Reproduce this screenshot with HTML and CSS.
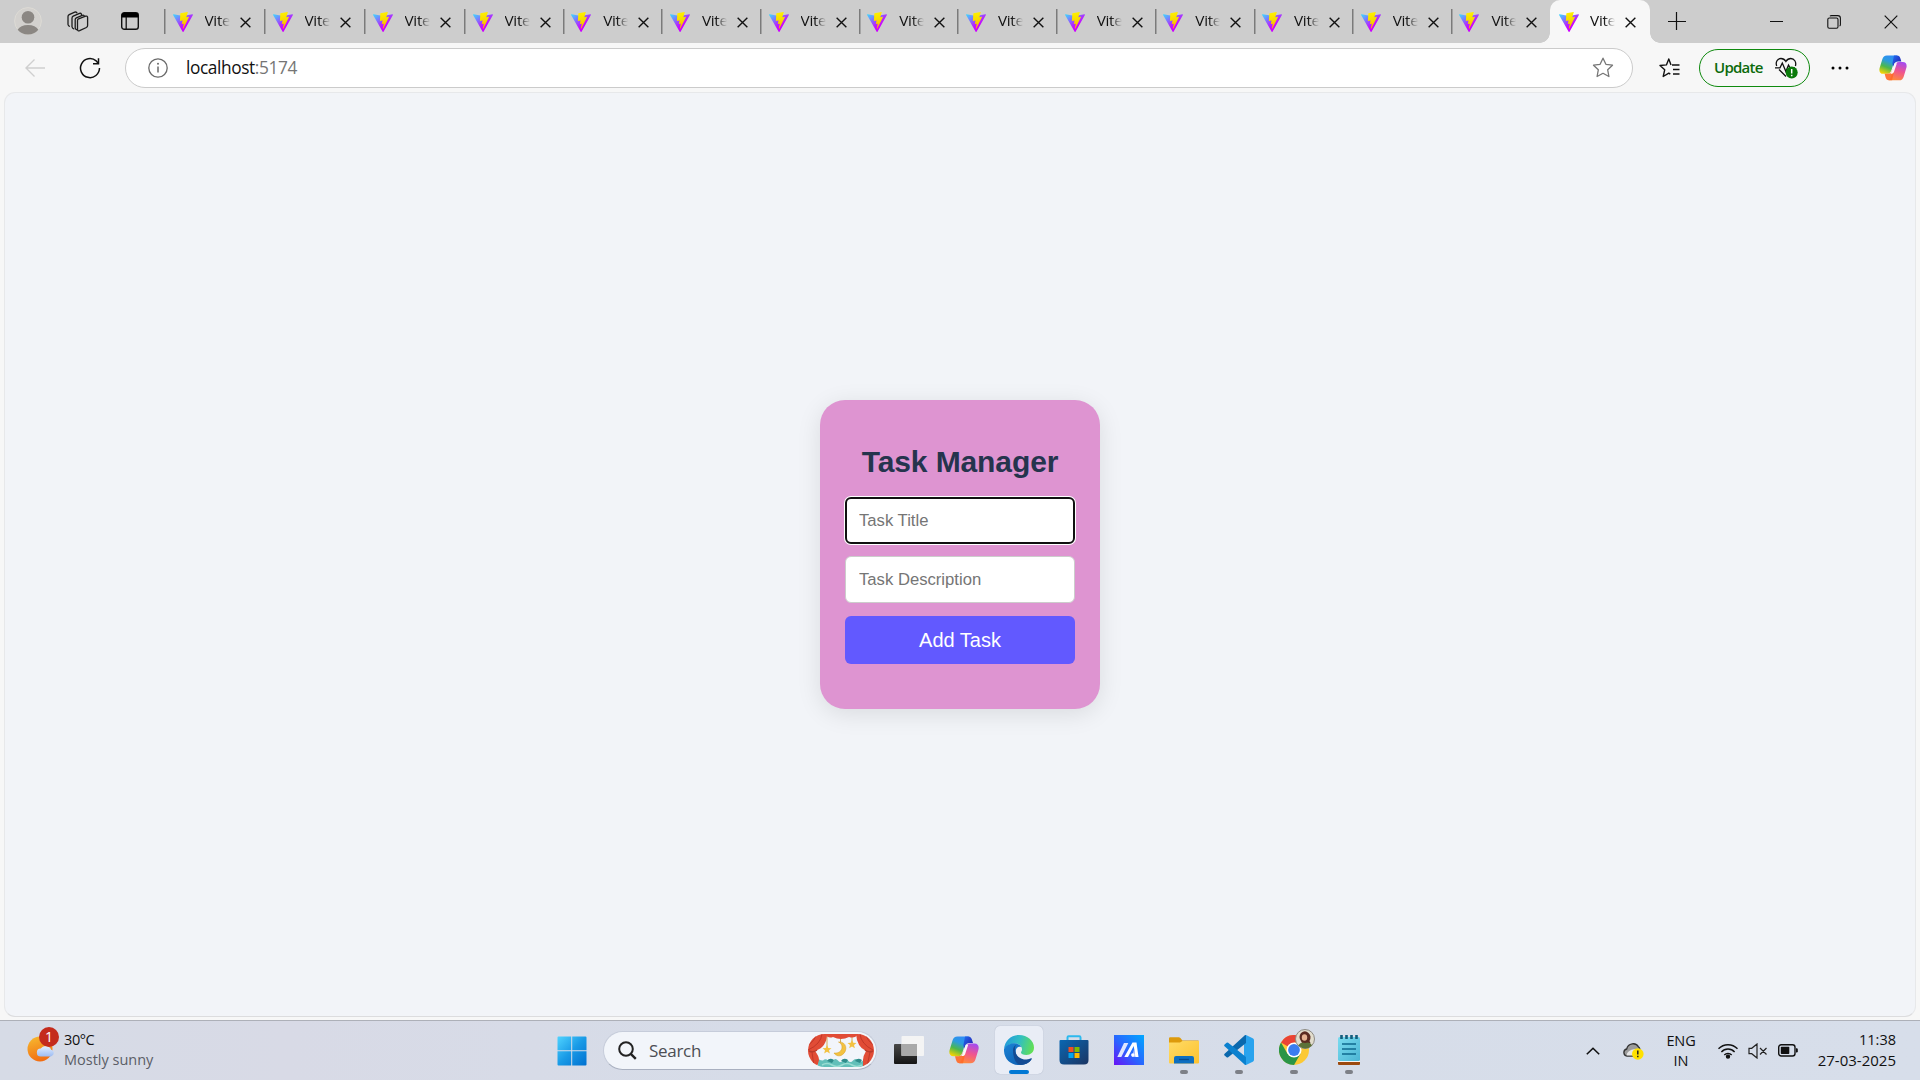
FILE: index.html
```html
<!DOCTYPE html>
<html lang="en">
<head>
<meta charset="utf-8">
<title>Task Manager</title>
<link rel="stylesheet" href="styles.css">
</head>
<body>
<svg class="defs" width="0" height="0" aria-hidden="true">
  <defs>
    <linearGradient id="vite-a" x1="-1%" y1="8%" x2="54%" y2="74%"><stop offset="0" stop-color="#41d1ff"/><stop offset=".75" stop-color="#b02cff"/><stop offset="1" stop-color="#cc00ff"/></linearGradient>
    <linearGradient id="vite-b" x1="43%" y1="2%" x2="50%" y2="89%"><stop offset="0" stop-color="#fff000"/><stop offset=".5" stop-color="#f7dc00"/><stop offset="1" stop-color="#ffb400"/></linearGradient>
    <linearGradient id="cop-a" x1=".6" y1="0" x2=".2" y2="1"><stop offset="0" stop-color="#2f8df5"/><stop offset=".3" stop-color="#2b9be0"/><stop offset=".62" stop-color="#4cb84c"/><stop offset="1" stop-color="#ffd500"/></linearGradient>
    <linearGradient id="cop-b" x1=".7" y1="0" x2=".4" y2="1"><stop offset="0" stop-color="#a44bf0"/><stop offset=".5" stop-color="#f0558f"/><stop offset="1" stop-color="#ff8a3c"/></linearGradient>
    <linearGradient id="cop-c" x1="0" y1="0" x2="1" y2="1"><stop offset="0" stop-color="#1f6ff0"/><stop offset="1" stop-color="#2a10a8"/></linearGradient>
    <symbol id="vite" viewBox="0 0 256 257">
      <path fill="url(#vite-a)" d="M255.153 37.938 134.897 252.976c-2.483 4.44-8.862 4.466-11.382.048L.875 37.958c-2.746-4.814 1.371-10.646 6.827-9.67l120.385 21.517a6.537 6.537 0 0 0 2.322-.004l117.867-21.483c5.438-.991 9.574 4.796 6.877 9.62Z"/>
      <path fill="url(#vite-b)" d="M185.432.063 96.44 17.501a3.268 3.268 0 0 0-2.634 3.014l-5.474 92.456a3.268 3.268 0 0 0 3.997 3.378l24.777-5.718c2.318-.535 4.413 1.507 3.936 3.838l-7.361 36.047c-.495 2.426 1.782 4.5 4.151 3.78l15.304-4.649c2.372-.72 4.652 1.36 4.15 3.788l-11.698 56.621c-.732 3.542 3.979 5.473 5.943 2.437l1.313-2.028 72.516-144.72c1.215-2.423-.88-5.186-3.54-4.672l-25.505 4.922c-2.396.462-4.435-1.77-3.759-4.114l16.646-57.705c.677-2.35-1.37-4.583-3.769-4.113Z"/>
    </symbol>
    <symbol id="x" viewBox="0 0 12 12"><path d="M.7.7 11.3 11.3M11.3.7.7 11.3" fill="none" stroke="#111" stroke-width="1.5"/></symbol>
    <symbol id="copilot" viewBox="0 0 30 28">
      <path fill="url(#cop-a)" d="M8.5.5h11.6c-1.6.7-2.3 2.2-2.9 4L13.500 16c-.8 2.500-1.800 4.300-4.500 4.300H4.500C1 20.300-.3 17.500.6 14L3.500 4.500C4.300 2 5.800.5 8.500.5Z"/>
      <path fill="url(#cop-c)" d="M16 .5h3.200c2.300 0 3.200 1.300 3.800 3.300l1 3.200h-3.500c-2.300 0-3.500 1-4.200 3l-1.100 3-.8-4Z"/>
      <path fill="url(#cop-b)" d="M21.500 7.500h4c3.500 0 4.800 2.800 3.900 6.300l-2.900 9.500c-.8 2.500-2.300 4-5 4H9.900c1.600-.7 2.300-2.200 2.900-4l3.700-11.500c.8-2.500 2.300-4.300 5-4.300Z"/>
      <path fill="#ff6a28" d="M14 27.300h-3.200c-2.300 0-3.200-1.300-3.800-3.300l-1-3.700h3.500c2.300 0 3.500-1 4.200-3l1-2.500 1.300 4Z" opacity=".92"/>
      <path fill="#fbf6fa" d="M16.700 8.800h2.500l-3.200 9.600q-.7 1.700-2.200 1.700h-1.600q1-1.500 1.500-3.200Z"/>
    </symbol>
  </defs>
</svg>

<div class="screen">
  <header class="tabstrip">
    <div class="strip-button avatar-cell"><svg width="28" height="28" viewBox="0 0 28 28"><circle cx="14" cy="14" r="13.400" fill="#d3d1ce" stroke="#dddbd5"/><circle cx="14" cy="10.300" r="6.300" fill="#8b8783"/><path d="M3.600 22.700C5.500 19.600 9 18 14 18s8.500 1.600 10.400 4.700A13.400 13.400 0 0 1 14 27.400 13.400 13.400 0 0 1 3.600 22.700Z" fill="#8b8783"/></svg></div>
    <div class="strip-button"><svg width="22" height="22" viewBox="0 0 22 22" fill="none" stroke="#1c1c1c" stroke-width="1.300"><path d="M11 8.200 18.600 5.200q2-.6 2 1.200v8.200q0 1.300-1.200 1.900l-6.800 3.200q-2 .7-2.100-1.200V10q0-1.400.5-1.800ZM14.500 4.300V3.600q-.2-1.800-2-1.200L6.200 5.200Q5 5.800 5 7.200v8.600q.1 1.800 2.300 2.300M10 2.200Q9.500.5 7.700 1.200L2.200 3.600Q1 4.200 1 5.500v8q.2 1.800 2 1.900M17.500 5.300q-.5-1.500-2.200-1l-6 2.500Q8.200 7.300 8.200 8.600V17q.2 1.600 2.400 2"/></svg></div>
    <div class="strip-button actions-cell"><svg width="18" height="18" viewBox="0 0 18 18"><rect x=".7" y=".7" width="16.600" height="16.600" rx="2.600" fill="none" stroke="#111" stroke-width="1.400"/><path d="M.7 5.500V3.200Q.7.700 3.200.7h11.600q2.500 0 2.500 2.500v2.300Z" fill="#000"/><path d="M5.200 5v12" stroke="#111" stroke-width="1.300"/></svg></div>
    <nav class="tabs">
      <div class="tab wide"><svg class="favicon"><use href="#vite"/></svg><span class="tab-title">Vite</span><svg class="tab-close"><use href="#x"/></svg></div>
      <div class="tab wide"><svg class="favicon"><use href="#vite"/></svg><span class="tab-title">Vite</span><svg class="tab-close"><use href="#x"/></svg></div>
      <div class="tab wide"><svg class="favicon"><use href="#vite"/></svg><span class="tab-title">Vite</span><svg class="tab-close"><use href="#x"/></svg></div>
      <div class="tab"><svg class="favicon"><use href="#vite"/></svg><span class="tab-title">Vite</span><svg class="tab-close"><use href="#x"/></svg></div>
      <div class="tab"><svg class="favicon"><use href="#vite"/></svg><span class="tab-title">Vite</span><svg class="tab-close"><use href="#x"/></svg></div>
      <div class="tab"><svg class="favicon"><use href="#vite"/></svg><span class="tab-title">Vite</span><svg class="tab-close"><use href="#x"/></svg></div>
      <div class="tab"><svg class="favicon"><use href="#vite"/></svg><span class="tab-title">Vite</span><svg class="tab-close"><use href="#x"/></svg></div>
      <div class="tab"><svg class="favicon"><use href="#vite"/></svg><span class="tab-title">Vite</span><svg class="tab-close"><use href="#x"/></svg></div>
      <div class="tab"><svg class="favicon"><use href="#vite"/></svg><span class="tab-title">Vite</span><svg class="tab-close"><use href="#x"/></svg></div>
      <div class="tab"><svg class="favicon"><use href="#vite"/></svg><span class="tab-title">Vite</span><svg class="tab-close"><use href="#x"/></svg></div>
      <div class="tab"><svg class="favicon"><use href="#vite"/></svg><span class="tab-title">Vite</span><svg class="tab-close"><use href="#x"/></svg></div>
      <div class="tab"><svg class="favicon"><use href="#vite"/></svg><span class="tab-title">Vite</span><svg class="tab-close"><use href="#x"/></svg></div>
      <div class="tab"><svg class="favicon"><use href="#vite"/></svg><span class="tab-title">Vite</span><svg class="tab-close"><use href="#x"/></svg></div>
      <div class="tab"><svg class="favicon"><use href="#vite"/></svg><span class="tab-title">Vite</span><svg class="tab-close"><use href="#x"/></svg></div>
      <div class="tab active"><svg class="favicon"><use href="#vite"/></svg><span class="tab-title">Vite</span><svg class="tab-close"><use href="#x"/></svg></div>
    </nav>
    <div class="new-tab"><svg width="18" height="18" viewBox="0 0 18 18"><path d="M8.500 0v18M0 9.500h18" stroke="#111" stroke-width="1.200"/></svg></div>
    <div class="window-controls">
      <div class="control"><svg width="13" height="13" viewBox="0 0 13 13"><path d="M0 6.500h13" stroke="#111" stroke-width="1"/></svg></div>
      <div class="control"><svg width="14" height="14" viewBox="0 0 14 14" fill="none" stroke="#111" stroke-width="1.100"><rect x=".8" y="3" width="10.200" height="10.200" rx="1.500"/><path d="M3 1.200Q3.400.6 4.500.6h6.200q2.700 0 2.700 2.700v6.200q0 1.100-.8 1.600"/></svg></div>
      <div class="control"><svg width="14" height="14" viewBox="0 0 14 14"><path d="M.7.7l12.600 12.600M13.300.7.7 13.300" stroke="#111" stroke-width="1.200"/></svg></div>
    </div>
  </header>

  <div class="toolbar">
    <div class="tool"><svg width="20" height="18" viewBox="0 0 20 18"><path d="M20 9H1M9.500.6 1 9l8.500 8.400" fill="none" stroke="#cfcfcf" stroke-width="1.400"/></svg></div>
    <div class="tool"><svg width="22" height="22" viewBox="0 0 22 22" fill="none" stroke="#111" stroke-width="1.500"><path d="M20.500 11A9.500 9.500 0 1 1 17.200 3.900L19.300 6.500M19.500 1.300v5.400H14"/></svg></div>
    <div class="address">
      <svg class="info" width="20" height="20" viewBox="0 0 20 20"><circle cx="10" cy="10" r="9.200" fill="none" stroke="#6a6a6a" stroke-width="1.300"/><path d="M10 8.500v6" stroke="#6a6a6a" stroke-width="1.500"/><circle cx="10" cy="5.800" r="1" fill="#6a6a6a"/></svg>
      <span class="url">localhost<span class="port">:5174</span></span>
      <svg class="star" width="22" height="21" viewBox="0 0 22 21"><path d="m11 1.200 2.900 6.100 6.600.9-4.800 4.600 1.200 6.700L11 16.300l-5.900 3.200 1.200-6.700L1.500 8.200l6.600-.9Z" fill="none" stroke="#767676" stroke-width="1.300" stroke-linejoin="round"/></svg>
    </div>
    <div class="tool fav-tool"><svg width="21" height="20" viewBox="0 0 21 20" fill="none" stroke="#111" stroke-width="1.400" stroke-linejoin="round"><path d="M13 7h7.500M14 11.500h6.500M14 16h6.500M12 6.900 9.800 1 7.400 6.900 1 7.500l4.700 4.300-1.500 6.700 5.600-3.400 1.500 1"/></svg></div>
    <div class="update"><span>Update</span><svg width="26" height="22" viewBox="0 0 26 22"><g fill="none" stroke="#111" stroke-width="1.300"><path d="M2.700 9C1.200 5 3.500 1.500 7 1.500c2.200 0 3.900 1.400 4.900 3 1-1.600 2.700-3 4.900-3 3.500 0 5.800 3.500 4.600 7.500M5 12.500l7 7"/><path d="M1 10.800h5L8.300 6l3.600 8.500L14.500 8l1.500 2.800h5"/></g><circle cx="17.700" cy="15.500" r="6" fill="#0a7a0a"/><path d="M17.700 12v4.500M17.700 17.700v1.600" stroke="#fff" stroke-width="1.500"/></svg></div>
    <div class="tool dots-tool"><svg width="18" height="4" viewBox="0 0 18 4"><circle cx="2" cy="2" r="1.500"/><circle cx="9" cy="2" r="1.500"/><circle cx="16" cy="2" r="1.500"/></svg></div>
    <div class="tool copilot-tool"><svg width="28" height="26"><use href="#copilot"/></svg></div>
  </div>

  <main class="viewport">
    <section class="card">
      <h1>Task Manager</h1>
      <input class="field focused" type="text" placeholder="Task Title">
      <input class="field" type="text" placeholder="Task Description">
      <button class="add" type="button">Add Task</button>
    </section>
  </main>

  <footer class="taskbar">
    <div class="weather">
      <div class="weather-icon">
        <svg width="30" height="30" viewBox="0 0 30 30"><defs><linearGradient id="sun" x1=".3" y1="0" x2=".6" y2="1"><stop offset="0" stop-color="#f6b62e"/><stop offset="1" stop-color="#f26a10"/></linearGradient><linearGradient id="cloud" x1="0" y1="0" x2="0" y2="1"><stop offset="0" stop-color="#e4f0ff"/><stop offset="1" stop-color="#9dbcf2"/></linearGradient></defs><circle cx="13" cy="13" r="12.500" fill="url(#sun)"/><path d="M14 20.500a4 4 0 0 1-.3-8 6 6 0 0 1 10.500 1.200 3.500 3.500 0 0 1-.3 6.800Z" fill="url(#cloud)"/></svg>
        <span class="badge">1</span>
      </div>
      <div class="weather-text"><span class="temp">30°C</span><span class="condition">Mostly sunny</span></div>
    </div>

    <div class="start"><svg width="30" height="30" viewBox="0 0 30 30"><defs><linearGradient id="win" x1="0" y1="0" x2="1" y2="1"><stop offset="0" stop-color="#4fd3ff"/><stop offset=".5" stop-color="#199ae6"/><stop offset="1" stop-color="#0070d0"/></linearGradient></defs><path fill="url(#win)" d="M1.500.5h12.700v13.700H.5V1.500q0-1 1-1Zm13.700 0h13.300q1 0 1 1v12.700H15.200ZM.5 15.200h13.700v14.300H1.500q-1 0-1-1Zm14.700 0h14.300v13.300q0 1-1 1H15.200Z"/></svg></div>
    <div class="search">
      <svg width="19" height="19" viewBox="0 0 19 19"><circle cx="8" cy="8" r="6.800" fill="none" stroke="#222" stroke-width="2"/><path d="m12.800 12.800 5 5" stroke="#222" stroke-width="2.400"/></svg>
      <span>Search</span>
      <svg class="theatre" width="66" height="33" viewBox="0 0 66 33">
        <defs><clipPath id="pill"><rect width="66" height="33" rx="16.500"/></clipPath></defs>
        <g clip-path="url(#pill)">
          <rect width="66" height="34" fill="#f2f5fb"/>
          <path d="M10 34V25q3 1.500 5 1.500 2.500-2.500 5 0t5 0q2.500-3 5 0t5 0q2.500-3 5 0t5 0q2.500-3 5 0t6-1V34Z" fill="#62bfb9"/>
          <path d="M19 27q2.500-4 7-1l-2 3Zm14 0q2.500-4 7-1l-2 3Zm14 0q2.500-4 7-1l-2 3Z" fill="#2f8c8b"/>
          <path d="M14 31q5-3 10 0t10 0 10 0 10 0" fill="none" stroke="#98dcd2" stroke-width="1.500"/>
          <path d="M19 2v11M32.500 0v9M44 2v6" stroke="#c99a35" stroke-width=".8"/>
          <path d="M30.500 8c8-1 10 9 3.500 13-3 1.800-6.500.5-8-2 4.500.5 8-2 8-6 0-2.300-1.300-4-3.500-5Z" fill="#f3c242" stroke="#d79c24" stroke-width=".5"/>
          <path d="m19 11 1.300 3 3.200.2-2.500 2 .9 3.200-2.900-1.700-2.800 1.700.8-3.200-2.500-2 3.200-.2ZM44 6l1.300 2.800 3.200.3-2.500 2 .9 3.200-2.900-1.700-2.800 1.700.8-3.200-2.500-2 3.200-.3Z" fill="#f3c242"/>
          <path d="M0 0h19q0 13-12 17 4 5 4 9l-2 7H0Z" fill="#e14c36"/><path d="M66 0H48q1 13 10 17-3 5-3 9v7h11Z" fill="#e14c36"/>
          <path d="M17 0h33q-3 5-9 3-8 4-16 0-5 2-8-3Z" fill="#e14c36"/>
          <path d="M14 0Q13 10 0 16M8 0Q7 7 0 11M4 18l2 15M52 0q1 10 13 16M58 0q1 7 8 11M62 18l-3 15" fill="none" stroke="#b93226" stroke-width=".8"/>
          <path d="M1 17q4 2 8-1M57 16q4 3 8 1" fill="none" stroke="#b93a2b" stroke-width="1.500"/>
        </g>
      </svg>
    </div>

    <div class="apps">
      <div class="app"><svg width="30" height="28" viewBox="0 0 30 28"><defs><linearGradient id="tv" x1="0" y1="0" x2="0" y2="1"><stop offset="0" stop-color="#484848"/><stop offset="1" stop-color="#151515"/></linearGradient></defs><rect x="0" y="8" width="23" height="20" rx="1" fill="url(#tv)"/><rect x="7.500" y="0" width="22.500" height="20" rx="1" fill="#f4f4f4"/><path d="M7.500 8H23v12H7.500Z" fill="#a9a9a9"/></svg></div>
      <div class="app"><svg width="30" height="28"><use href="#copilot"/></svg></div>
      <div class="app"><div class="tile"><svg width="30" height="30" viewBox="0 0 30 30"><defs><linearGradient id="edge-top" x1="0" y1=".3" x2="1" y2=".5"><stop offset="0" stop-color="#2298dc"/><stop offset=".5" stop-color="#31bfc2"/><stop offset="1" stop-color="#62df55"/></linearGradient><linearGradient id="edge-bot" x1="0" y1="0" x2="1" y2="1"><stop offset="0" stop-color="#1b83d5"/><stop offset="1" stop-color="#0b57ab"/></linearGradient></defs><path d="M0 14C.8 6 7 0 15 0c8.500 0 15 6 15 12.500 0 4.700-3.500 7.500-7.500 7.500-3.500 0-5.500-1.200-5.500-2.500 0-.9 1-1.300 1-3.200 0-3.300-3.200-5.800-7-5.800-4.500 0-8.500 2.300-11 5.500Z" fill="url(#edge-top)"/><path d="M0 14C2 10.500 6 8.300 10.500 8.300c3 0 5.800 1.500 7 3.700-1-.5-5.800-.8-5.800 4.500 0 6 5.800 9.500 10.300 9.500 2.300 0 4-.7 5.300-1.300C24.800 28 20.500 30 15 30 6.500 30-.5 23.500 0 14Z" fill="url(#edge-bot)"/><path d="M9 15c0-2 1-4 3.500-5.500C10.200 12 11 15 11.500 17c1 4.500 6 8 11 7.500 2 0 3.500-.8 4.800-1.200.6-.1.800.5.400 1-2.500 3.700-6.500 5.700-11 5.700C12 29.500 9 23 9 15Z" fill="#134b94"/></svg><span class="running current"></span></div></div>
      <div class="app"><svg width="30" height="30" viewBox="0 0 30 30"><defs><linearGradient id="bag" x1="0" y1="0" x2="1" y2="1"><stop offset="0" stop-color="#0a67b2"/><stop offset="1" stop-color="#1b3563"/></linearGradient></defs><path d="M8.500 7V2.500q0-1.200 1.200-1.200h10.600q1.200 0 1.200 1.200V7" fill="none" stroke="#2db9ee" stroke-width="2"/><path d="M.5 6q0-1 1-1h27q1 0 1 1v19q0 4.500-4.500 4.500H5Q.5 29.500.5 25Z" fill="url(#bag)"/><path d="M9.500 12h5v5h-5Z" fill="#f25022"/><path d="M15.500 12h5v5h-5Z" fill="#7fba00"/><path d="M9.500 18h5v5h-5Z" fill="#00a4ef"/><path d="M15.500 18h5v5h-5Z" fill="#ffb900"/></svg></div>
      <div class="app"><svg width="30" height="30" viewBox="0 0 30 30"><defs><linearGradient id="asus" x1="1" y1="0" x2="0" y2="1"><stop offset="0" stop-color="#00a8ff"/><stop offset=".55" stop-color="#2b63ff"/><stop offset="1" stop-color="#6a12f5"/></linearGradient></defs><rect width="30" height="30" fill="url(#asus)"/><path d="M10 8h4.300L7.300 22H3.300Z" fill="#dfe6ff"/><path d="M18.500 7.500h4l2 14.500h-3.300l-1.500-11L14 22h-3.700Z" fill="#fff"/><path d="m20.300 13 1 9H18Z" fill="#a9bcff"/><circle cx="18.800" cy="20" r="1.700" fill="#fff"/></svg></div>
      <div class="app"><svg width="30" height="27" viewBox="0 0 30 27"><defs><linearGradient id="folder" x1="0" y1="0" x2="1" y2="1"><stop offset="0" stop-color="#ffdb66"/><stop offset="1" stop-color="#fdc22f"/></linearGradient></defs><path d="M0 1.500Q0 .3 1.200.3h8.500q1 0 1.700.8l2 2.400H29q1 0 1 1V10H0Z" fill="#dd9a0c"/><path d="M0 5.500h11l2.500-1.500H30v21.500q0 1-1 1H1q-1 0-1-1Z" fill="url(#folder)"/><path d="M5 26.500V21q0-2 2-2h16q2 0 2 2v5.500Z" fill="#0f6fc0"/><path d="M10 22.500h10" stroke="#074b8d" stroke-width="1.300"/></svg><span class="running"></span></div>
      <div class="app"><svg width="30" height="30" viewBox="0 0 30 30"><path d="m22 0 6.700 3.200q1.300.7 1.300 2v19.600q0 1.300-1.300 2L22 30l-2-1V1Z" fill="#29a3ee"/><path d="M22 0v8L4.200 22.300q-.8.600-1.600 0L.6 20.500q-.9-.9 0-1.700L20.300.7Q21 0 22 0Z" fill="#0a68ad"/><path d="M22 30v-8L4.200 7.700q-.8-.6-1.600 0L.6 9.500q-.9.900 0 1.700l19.700 18.100Q21 30 22 30Z" fill="#0b81cf"/></svg><span class="running"></span></div>
      <div class="app"><div class="chrome"><svg width="30" height="30" viewBox="0 0 30 30"><circle cx="15" cy="15" r="15" fill="#fcc934"/><path d="M15 15 2 7.500A15 15 0 0 1 28 7.500H15Z" fill="#ea4335"/><path d="M2 7.500A15 15 0 0 0 15 30l6.500-11.300L15 15 8.500 18.700Z" fill="#2a9547"/><circle cx="15" cy="15" r="7.500" fill="#fff"/><circle cx="15" cy="15" r="5.900" fill="#3b7df0"/></svg>
        <svg class="profile" width="20" height="20" viewBox="0 0 20 20"><circle cx="10" cy="10" r="9.500" fill="#e2ddcd" stroke="#8d8a83"/><path d="M6 12Q3 8 6 4q4-3.500 7.500 0 3.500 3 1 8l1 2H7Z" fill="#5b2a20"/><ellipse cx="9.500" cy="8.500" rx="2.700" ry="3.300" fill="#e5b191"/><path d="M3 16.500Q6 12.500 10 14q5-2 7 2.500-6 6-14 0Z" fill="#5c7138"/></svg></div><span class="running"></span></div>
      <div class="app"><svg width="24" height="30" viewBox="0 0 24 30"><defs><linearGradient id="note" x1="0" y1="0" x2="1" y2="1"><stop offset="0" stop-color="#7adcf0"/><stop offset="1" stop-color="#4bb4d3"/></linearGradient></defs><path d="M1 26h22v3q0 1-1 1H2q-1 0-1-1Z" fill="#9c4a10"/><path d="M1 25h22v2H1Z" fill="#f5f5f5"/><rect x="1" y="2" width="22" height="24" rx="1.500" fill="url(#note)"/><path d="M5 9h14M5 14h14M5 19h14" stroke="#0f6a8e" stroke-width="1.700"/><path d="M4.500 0v4M9.500 0v4M14.500 0v4M19.500 0v4" stroke="#125d7c" stroke-width="2.600"/></svg><span class="running"></span></div>
    </div>

    <div class="tray">
      <div class="tray-cell"><svg width="14" height="8" viewBox="0 0 14 8"><path d="m.8 7.300 6.200-6 6.200 6" fill="none" stroke="#111" stroke-width="1.600"/></svg></div>
      <div class="tray-cell"><svg width="21" height="18" viewBox="0 0 21 18"><path d="M4 14C0 13.500-.2 8 3.700 7 5 1 13 0 15.500 5c2 .5 2 3 1 9Z" fill="#9c9c9c" stroke="#333" stroke-width="1.300"/><path d="M3.500 13.500Q4 8 12 7l3 6.500Z" fill="#e6e6e6"/><circle cx="14.800" cy="12" r="5.800" fill="#ffe100"/><path d="M14.800 8.500v4M14.800 13.700v1.600" stroke="#222" stroke-width="1.500"/></svg></div>
      <div class="language"><span>ENG</span><span>IN</span></div>
      <div class="status">
        <svg width="20" height="16" viewBox="0 0 20 16" fill="none" stroke="#111" stroke-width="1.400"><path d="M.5 5.800a13.200 13.200 0 0 1 19 0M3.400 8.900a9 9 0 0 1 13.200 0M6.300 12a5.200 5.200 0 0 1 7.400 0"/><circle cx="10" cy="13.600" r="1.500" fill="#111"/></svg>
        <svg width="20" height="16" viewBox="0 0 20 16" fill="none" stroke="#222" stroke-width="1.200"><path d="M1 5.300h2.700L9 1v14l-5.300-4.300H1ZM12 5l6.500 6.500M18.500 5 12 11.500"/></svg>
        <svg width="20" height="13" viewBox="0 0 20 13"><rect x=".7" y=".7" width="16.300" height="11.300" rx="2.500" fill="none" stroke="#111" stroke-width="1.400"/><rect x="2.800" y="2.700" width="8.500" height="7.300" rx=".7" fill="#111"/><path d="M18 4.200h.6q1.200 0 1.200 1.200v1.800q0 1.200-1.200 1.200H18Z" fill="#111"/></svg>
      </div>
      <div class="clock"><span>11:38</span><span class="date">27-03-2025</span></div>
    </div>
  </footer>
</div>
</body>
</html>
```

FILE: styles.css
```css
* { box-sizing: border-box; }

body {
  margin: 0;
  font-family: "Open Sans", "Noto Sans", sans-serif;
  color: #111;
}

svg { display: block; flex: none; }
.defs { position: absolute; }

.screen {
  width: 1920px;
  height: 1080px;
  display: flex;
  flex-direction: column;
  overflow: hidden;
  background: #f7f7f7;
}

/* Tab strip */
.tabstrip {
  height: 43px;
  flex: none;
  display: flex;
  background: #cdcdcd;
  padding-left: 8px;
}
.strip-button {
  width: 40px;
  display: flex;
  align-items: center;
  justify-content: center;
  margin-right: 10px;
}
.avatar-cell { padding-bottom: 1px; }
.actions-cell { margin: 0 14px 0 2px; padding-bottom: 1px; }
.tabs { display: flex; }
.tab {
  width: 98.7px;
  height: 43px;
  display: flex;
  align-items: center;
  padding-left: 6.500px;
  background: linear-gradient(#7b7b7b, #7b7b7b) 0 9px / 1.500px 25px no-repeat;
}
.tab.wide { width: 100px; }
.favicon { width: 20px; height: 20px; margin: 1px 12px 0 2px; }
.tab-title {
  width: 25px;
  margin: 0 10px 3px 0;
  overflow: hidden;
  font-size: 15.300px;
  letter-spacing: -0.3px;
  line-height: 22px;
  white-space: nowrap;
  mask-image: linear-gradient(90deg, #000 55%, transparent 100%);
}
.tab-close { width: 11px; height: 11px; margin-top: 1px; }
.tab.active {
  width: 100px;
  position: relative;
  background: #f7f7f7;
  border-radius: 10px 10px 0 0;
}
.tab.active .favicon { margin-left: 3px; margin-right: 11px; }
.tab.active::before,
.tab.active::after {
  content: "";
  position: absolute;
  bottom: 0;
  width: 10px;
  height: 10px;
}
.tab.active::before { left: -10px; background: radial-gradient(circle at 0 0, transparent 9.500px, #f7f7f7 10px); }
.tab.active::after { right: -10px; background: radial-gradient(circle at 100% 0, transparent 9.500px, #f7f7f7 10px); }
.new-tab { margin-left: 18px; display: flex; align-items: center; padding-bottom: 2px; }
.window-controls { margin-left: auto; display: flex; padding-right: 1px; }
.control { width: 57px; display: flex; align-items: center; justify-content: center; }

/* Toolbar */
.toolbar {
  height: 49px;
  flex: none;
  display: flex;
  align-items: center;
  gap: 15px;
  padding: 0 7px 0 15px;
}
.tool { width: 40px; height: 40px; display: flex; align-items: center; justify-content: center; }
.address {
  width: 1508px;
  height: 40px;
  display: flex;
  align-items: center;
  padding: 0 18px 0 22px;
  border: 1px solid #cbcbcb;
  border-radius: 20px;
  background: #fff;
}
.url {
  margin: 1px 0 0 18px;
  font-size: 17.300px;
  letter-spacing: -0.4px;
  line-height: 24px;
  white-space: nowrap;
}
.port { color: #757575; }
.star { margin-left: auto; }
.fav-tool { margin-left: 1px; }
.update {
  width: 111px;
  height: 38px;
  margin-left: -5px;
  display: flex;
  align-items: center;
  gap: 11px;
  padding-left: 14px;
  border: 1.500px solid #0f8a0f;
  border-radius: 19px;
  color: #0b6a0b;
  font-size: 15px;
  font-weight: 600;
  letter-spacing: -0.75px;
}
.update span { width: 49px; white-space: nowrap; margin-bottom: 1px; }
.dots-tool { margin-left: -5px; }
.copilot-tool { margin-left: -2px; }

/* Page */
.viewport {
  height: 925px;
  flex: none;
  margin: 0 4px;
  display: flex;
  align-items: center;
  justify-content: center;
  background: #f2f4f8;
  border: 1px solid #e7e8ea;
  border-bottom-color: #dcdcde;
  border-radius: 11px;
}
.card {
  width: 280px;
  height: 309px;
  padding: 44px 25px 0;
  display: flex;
  flex-direction: column;
  background: #de94d1;
  border-radius: 25px;
  box-shadow: 0 5px 25px rgba(0, 0, 0, .1);
  font-family: "Liberation Sans", Arial, sans-serif;
}
.card h1 {
  margin: 0 0 18px;
  color: #25344d;
  font-size: 30px;
  letter-spacing: -0.1px;
  line-height: 35px;
  text-align: center;
  white-space: nowrap;
}
.field {
  width: 230px;
  height: 47px;
  margin: 0 0 13px;
  padding: 1px 13px 0;
  border: 1px solid #ccc;
  border-radius: 6px;
  background: #fff;
  font: 16.667px "Liberation Sans", Arial, sans-serif;
}
.field::placeholder { color: #757575; }
.field.focused { margin-bottom: 12px; border: 2px solid #101010; padding: 0 12px; box-shadow: 0 0 0 1px #fff; }
.add {
  width: 230px;
  height: 48px;
  padding: 0;
  border: 0;
  border-radius: 6px;
  background: #6259ff;
  color: #fff;
  font: 20px "Liberation Sans", Arial, sans-serif;
}

/* Taskbar */
.taskbar {
  height: 60px;
  flex: none;
  margin-top: 3px;
  display: flex;
  background: linear-gradient(90deg, #d6dbe6, #d8dae6 15%, #d6dce8 40%, #d7deea);
  border-top: 1px solid #adb0b8;
  font-size: 14.500px;
}
.weather { width: 545px; display: flex; padding: 6px 0 0 27px; }
.weather-icon { position: relative; width: 37px; padding-top: 9px; }
.badge {
  position: absolute;
  left: 12px;
  top: 0;
  width: 20px;
  height: 20px;
  border-radius: 50%;
  background: #c42b1c;
  color: #fff;
  font-size: 14px;
  line-height: 20px;
  text-align: center;
}
.weather-text { display: flex; flex-direction: column; line-height: 20px; padding-top: 3px; }
.temp { letter-spacing: -0.4px; }
.condition { color: #5b5e66; }
.start { width: 58px; padding: 15px 0 0 12px; }
.search {
  width: 274px;
  height: 39px;
  margin-top: 10px;
  display: flex;
  align-items: center;
  padding: 0 2px 0 14px;
  border: 1px solid #c6ccda;
  border-bottom-color: #a9b0c0;
  border-radius: 20px;
  background: #f2f5fa;
  color: #4c4e54;
  font-size: 17px;
  letter-spacing: -0.3px;
}
.search span { margin-left: 12px; }
.theatre { margin-left: auto; }
.apps { display: flex; margin-left: 4.500px; }
.app {
  width: 55px;
  height: 58px;
  display: flex;
  align-items: center;
  justify-content: center;
  position: relative;
}
.tile {
  position: relative;
  width: 48px;
  height: 48px;
  display: flex;
  align-items: center;
  justify-content: center;
  border-radius: 5px;
  background: #e9edf6;
  box-shadow: 0 0 1px #9aa3b8;
}
.chrome { position: relative; }
.profile { position: absolute; left: 16px; top: -6px; }
.running {
  position: absolute;
  left: 50%;
  bottom: 5px;
  width: 8px;
  height: 4px;
  margin-left: -4px;
  border-radius: 2px;
  background: #7d8087;
}
.running.current { bottom: 0; width: 20px; margin-left: -10px; background: #0078d4; }
.tray { margin-left: auto; display: flex; align-items: center; padding-right: 24px; }
.tray-cell { width: 40px; display: flex; justify-content: center; }
.language { width: 56px; display: flex; flex-direction: column; align-items: center; line-height: 20px; letter-spacing: -0.1px; }
.status { display: flex; align-items: center; gap: 10px; margin-left: 9px; }
.clock { width: 98px; display: flex; flex-direction: column; align-items: flex-end; line-height: 20px; padding-bottom: 2px; }
.clock .date { font-size: 15px; }
```
